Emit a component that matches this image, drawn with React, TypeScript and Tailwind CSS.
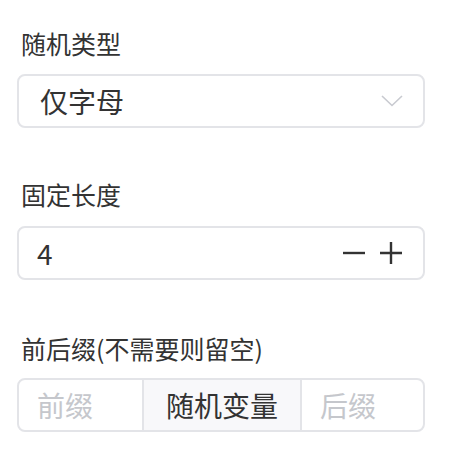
import { useState } from 'react';

const font = { fontFamily: '"Noto Sans CJK SC", "Noto Sans", sans-serif' };

export default function App() {
  const [len, setLen] = useState(4);

  return (
    <div className="min-h-screen w-[452px] bg-white pl-[17px] pt-[25px]" style={font}>
      <div className="w-[408px]">
        {/* 随机类型 */}
        <div className="flex h-9 items-center pl-1 text-[25px] leading-none text-[#333]">随机类型</div>
        <div className="mt-[13px] flex h-[54px] items-center justify-between rounded-lg border-2 border-[#e3e4e8] pl-[21px] pr-[20px]">
          <span className="text-[28px] leading-none text-[#333]">仅字母</span>
          <svg width="22" height="12" viewBox="0 0 22 12" fill="none">
            <path d="M1 1l10 9.5L21 1" stroke="#c8cad0" strokeWidth="1.6" />
          </svg>
        </div>

        {/* 固定长度 */}
        <div className="mt-[48px] flex h-9 items-center pl-1 text-[25px] leading-none text-[#333]">固定长度</div>
        <div className="mt-[14px] flex h-[54px] items-center justify-between rounded-lg border-2 border-[#e3e4e8] pl-[18px] pr-[20px]">
          <span className="text-[28px] leading-none text-[#333]">{len}</span>
          <div className="flex items-center gap-[13px]">
            <button onClick={() => setLen(Math.max(1, len - 1))} className="flex h-[24px] w-[24px] items-center justify-center">
              <svg width="24" height="24" viewBox="0 0 24 24">
                <path d="M1 12h22" stroke="#333" strokeWidth="2.4" />
              </svg>
            </button>
            <button onClick={() => setLen(len + 1)} className="flex h-[24px] w-[24px] items-center justify-center">
              <svg width="24" height="24" viewBox="0 0 24 24">
                <path d="M1 12h22M12 1v22" stroke="#333" strokeWidth="2.4" />
              </svg>
            </button>
          </div>
        </div>

        {/* 前后缀 */}
        <div className="mt-[50px] flex h-9 items-center pl-1 text-[25px] leading-none text-[#333]">前后缀(不需要则留空)</div>
        <div className="mt-[12px] flex h-[54px] overflow-hidden rounded-lg border-2 border-[#e3e4e8]">
          <div className="flex w-[123px] items-center pl-[18px] text-[28px] leading-none text-[#c5c7cc]">前缀</div>
          <div className="flex w-[160px] items-center justify-center border-x-2 border-[#e3e4e8] bg-[#f8f8fa] text-[28px] leading-none text-[#333]">
            随机变量
          </div>
          <div className="flex flex-1 items-center pl-[18px] text-[28px] leading-none text-[#c5c7cc]">后缀</div>
        </div>
      </div>
    </div>
  );
}
